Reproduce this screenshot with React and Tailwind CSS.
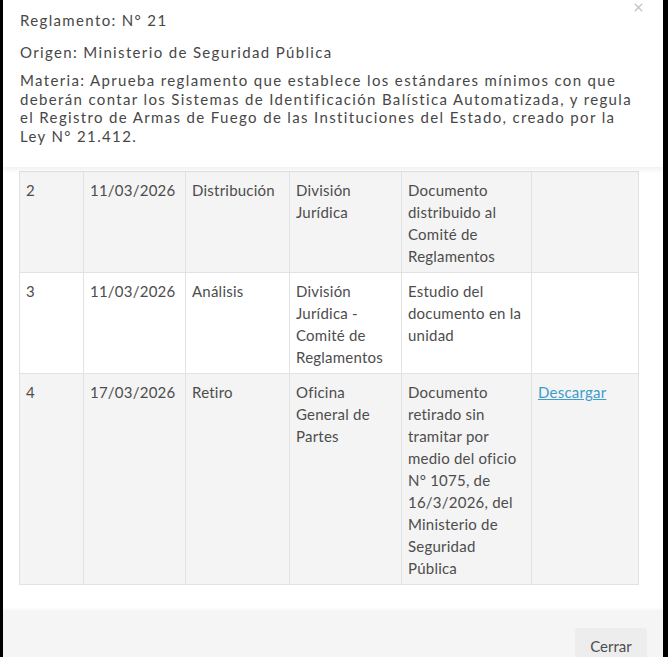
import { X } from "lucide-react";

const rows = [
  {
    n: "2",
    fecha: "11/03/2026",
    etapa: "Distribución",
    unidad: "División Jurídica",
    desc: "Documento distribuido al Comité de Reglamentos",
    doc: null,
    bg: "bg-[#f4f4f4]",
  },
  {
    n: "3",
    fecha: "11/03/2026",
    etapa: "Análisis",
    unidad: "División Jurídica - Comité de Reglamentos",
    desc: "Estudio del documento en la unidad",
    doc: null,
    bg: "bg-white",
  },
  {
    n: "4",
    fecha: "17/03/2026",
    etapa: "Retiro",
    unidad: "Oficina General de Partes",
    desc: "Documento retirado sin tramitar por medio del oficio N° 1075, de 16/3/2026, del Ministerio de Seguridad Pública",
    doc: "Descargar",
    bg: "bg-[#f4f4f4]",
  },
];

const cell = "border border-[#e2e2e2] pl-[6px] pr-[8px] pt-[7px] pb-[5px] align-top";

export default function App() {
  return (
    <div className="h-screen overflow-hidden bg-black pl-[3px] pr-[5px] font-['Lato',sans-serif] text-[#4d4d4d]">
      <div className="flex h-full flex-col bg-white">
        {/* HEADER */}
        <div className="relative z-10 px-[17px] pt-[11px] pb-[21px] text-[15px] tracking-[0.09em] text-[#474747] shadow-[0_3px_5px_rgba(0,0,0,0.06)]">
          <button className="absolute right-[18px] top-[1px] text-[#c4c4c4]">
            <X size={13} strokeWidth={2.5} />
          </button>
          <p className="leading-[19px]">Reglamento: N° 21</p>
          <p className="mt-[13px] leading-[19px]">Origen: Ministerio de Seguridad Pública</p>
          <p className="mt-[9px] leading-[18.7px]">
            Materia: Aprueba reglamento que establece los estándares mínimos con que
            deberán contar los Sistemas de Identificación Balística Automatizada, y regula
            el Registro de Armas de Fuego de las Instituciones del Estado, creado por la
            Ley N° 21.412.
          </p>
        </div>

        {/* BODY */}
        <div className="flex-1 overflow-hidden px-[16px] pt-[4px] pr-[24px]">
          <table className="w-full table-fixed border-collapse text-[15px] leading-[22px] tracking-[0.015em]">
            <colgroup>
              <col className="w-[64px]" />
              <col className="w-[102px]" />
              <col className="w-[104px]" />
              <col className="w-[112px]" />
              <col className="w-[130px]" />
              <col />
            </colgroup>
            <tbody>
              {rows.map((r) => (
                <tr key={r.n} className={r.bg}>
                  <td className={cell}>{r.n}</td>
                  <td className={cell}>{r.fecha}</td>
                  <td className={cell}>{r.etapa}</td>
                  <td className={cell}>{r.unidad}</td>
                  <td className={cell}>{r.desc}</td>
                  <td className={cell}>
                    {r.doc && (
                      <a href="#" className="text-[#3d9ccc] underline">
                        {r.doc}
                      </a>
                    )}
                  </td>
                </tr>
              ))}
            </tbody>
          </table>
        </div>

        {/* FOOTER */}
        <div className="flex h-[47px] shrink-0 justify-end bg-[#f5f5f5] pt-[18px] pr-[16px] shadow-[0_-1px_2px_rgba(0,0,0,0.03)]">
          <button className="h-[38px] w-[72px] rounded-[3px] bg-[#ededed] pb-[2px] text-[15px] text-[#4d4d4d]">
            Cerrar
          </button>
        </div>
      </div>
    </div>
  );
}
